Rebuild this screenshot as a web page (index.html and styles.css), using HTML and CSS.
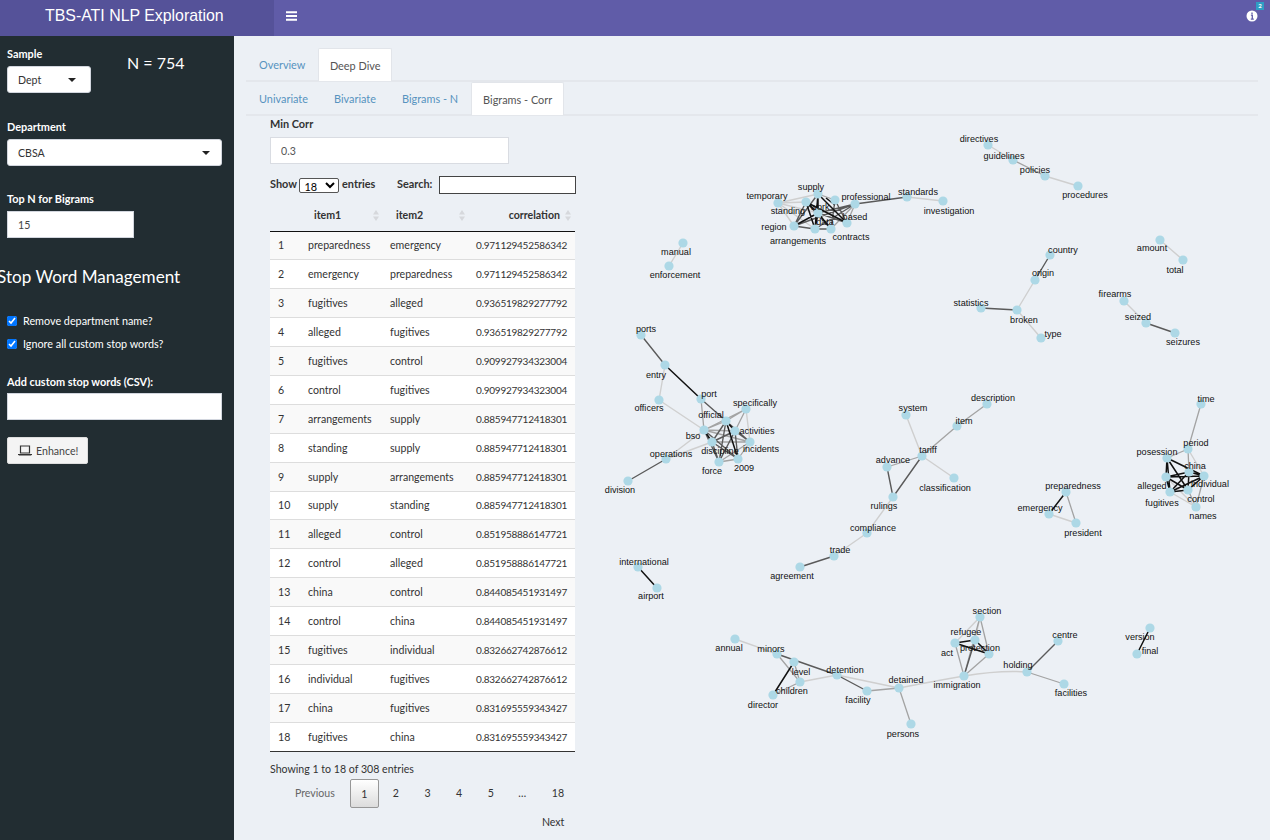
FILE: index.html
```html
<!DOCTYPE html>
<html lang="en">
<head>
<meta charset="utf-8">
<title>TBS-ATI NLP Exploration</title>
<link rel="stylesheet" href="styles.css">
</head>
<body>
<header class="topbar">
  <div class="logo">TBS-ATI NLP Exploration</div>
  <div class="navbar">
    <svg class="burger" width="11" height="10" viewBox="0 0 11 10"><path d="M0 1.2h11M0 5h11M0 8.8h11" stroke="#fff" stroke-width="1.9"/></svg>
    <div class="info">
      <svg width="12" height="12" viewBox="0 0 12 12"><circle cx="6" cy="6" r="5.5" fill="#fff"/><path d="M6 2.4v1.5M4.9 5.2H6.3V9M4.8 9.2h3" stroke="#605ca8" stroke-width="1.3" fill="none"/></svg>
      <span class="badge">2</span>
    </div>
  </div>
</header>
<div class="layout">
  <aside class="sidebar">
    <div class="sample-row">
      <div class="field">
        <label class="lbl">Sample</label>
        <div class="pick pick-sm"><span>Dept</span><i class="caret"></i></div>
      </div>
      <div class="count">N = 754</div>
    </div>
    <label class="lbl lbl-dept">Department</label>
    <div class="pick pick-lg"><span>CBSA</span><i class="caret"></i></div>
    <label class="lbl lbl-top">Top N for Bigrams</label>
    <input class="side-input side-input-sm" type="text" value="15">
    <h3 class="side-title">Stop Word Management</h3>
    <label class="check check-first"><input type="checkbox" checked>Remove department name?</label>
    <label class="check"><input type="checkbox" checked>Ignore all custom stop words?</label>
    <label class="lbl lbl-custom">Add custom stop words (CSV):</label>
    <input class="side-input side-input-lg" type="text">
    <button class="enhance" type="button">
      <svg width="14" height="11" viewBox="0 0 14 11"><path d="M2.5 1h9v7h-9z" fill="none" stroke="#333" stroke-width="1.2"/><path d="M0 9h14v.6l-1 1H1l-1-1z" fill="#333"/></svg>
      Enhance!
    </button>
  </aside>
  <main class="content">
    <nav class="tabs">
      <a class="tab">Overview</a>
      <a class="tab tab-on tab-dd">Deep Dive</a>
    </nav>
    <nav class="tabs">
      <a class="tab">Univariate</a>
      <a class="tab">Bivariate</a>
      <a class="tab">Bigrams - N</a>
      <a class="tab tab-on tab-corr">Bigrams - Corr</a>
    </nav>
    <section class="panel">
      <div class="left">
        <label class="lbl-dark">Min Corr</label>
        <input class="corr-input" type="text" value="0.3">
        <div class="dt-top">
          <label class="dt-len">Show <select><option>18</option></select> entries</label>
          <label class="dt-search">Search: <input type="text"></label>
        </div>
        <table class="dt">
          <colgroup><col class="c1"><col class="c2"><col class="c3"><col class="c4"></colgroup>
          <thead>
            <tr>
              <th></th>
              <th><div class="th-in"><span>item1</span><svg class="sort" width="6" height="11" viewBox="0 0 6 11"><path d="M3 0l3 4.5H0zM3 11L0 6.5h6z" fill="#d6d8dc"/></svg></div></th>
              <th><div class="th-in"><span>item2</span><svg class="sort" width="6" height="11" viewBox="0 0 6 11"><path d="M3 0l3 4.5H0zM3 11L0 6.5h6z" fill="#d6d8dc"/></svg></div></th>
              <th><div class="th-in th-end"><span>correlation</span><svg class="sort" width="6" height="11" viewBox="0 0 6 11"><path d="M3 0l3 4.5H0zM3 11L0 6.5h6z" fill="#d6d8dc"/></svg></div></th>
            </tr>
          </thead>
          <tbody>
            <tr><td>1</td><td>preparedness</td><td>emergency</td><td class="num">0.971129452586342</td></tr>
            <tr><td>2</td><td>emergency</td><td>preparedness</td><td class="num">0.971129452586342</td></tr>
            <tr><td>3</td><td>fugitives</td><td>alleged</td><td class="num">0.936519829277792</td></tr>
            <tr><td>4</td><td>alleged</td><td>fugitives</td><td class="num">0.936519829277792</td></tr>
            <tr><td>5</td><td>fugitives</td><td>control</td><td class="num">0.909927934323004</td></tr>
            <tr><td>6</td><td>control</td><td>fugitives</td><td class="num">0.909927934323004</td></tr>
            <tr><td>7</td><td>arrangements</td><td>supply</td><td class="num">0.885947712418301</td></tr>
            <tr><td>8</td><td>standing</td><td>supply</td><td class="num">0.885947712418301</td></tr>
            <tr><td>9</td><td>supply</td><td>arrangements</td><td class="num">0.885947712418301</td></tr>
            <tr><td>10</td><td>supply</td><td>standing</td><td class="num">0.885947712418301</td></tr>
            <tr><td>11</td><td>alleged</td><td>control</td><td class="num">0.851958886147721</td></tr>
            <tr><td>12</td><td>control</td><td>alleged</td><td class="num">0.851958886147721</td></tr>
            <tr><td>13</td><td>china</td><td>control</td><td class="num">0.844085451931497</td></tr>
            <tr><td>14</td><td>control</td><td>china</td><td class="num">0.844085451931497</td></tr>
            <tr><td>15</td><td>fugitives</td><td>individual</td><td class="num">0.832662742876612</td></tr>
            <tr><td>16</td><td>individual</td><td>fugitives</td><td class="num">0.832662742876612</td></tr>
            <tr><td>17</td><td>china</td><td>fugitives</td><td class="num">0.831695559343427</td></tr>
            <tr><td>18</td><td>fugitives</td><td>china</td><td class="num">0.831695559343427</td></tr>
          </tbody>
        </table>
        <div class="dt-info">Showing 1 to 18 of 308 entries</div>
        <div class="pager">
          <a class="pg pg-prev">Previous</a>
          <a class="pg pg-on">1</a>
          <a class="pg">2</a>
          <a class="pg">3</a>
          <a class="pg">4</a>
          <a class="pg">5</a>
          <span class="pg">…</span>
          <a class="pg pg-last">18</a>
          <a class="pg pg-next">Next</a>
        </div>
      </div>
      <svg class="graph" width="670" height="640" viewBox="590 120 670 640">
        <path class="e-l" d="M778 203L818 194M778 203L806 202M778 203L818 213M778 203L794 226M778 203L815 229M943 201L907 197M683 243L669 266M1160 240L1183 260M1124 301L1146 323M1017 310L1035 280M1017 310L1041 338M988 145L1013 160M1045 176L1078 186M665 365L659 400M659 400L704 430M704 430L666 459M712 442L666 459M746 409L750 442M906 415L922 456M922 456L954 478M893 497L867 533M867 533L834 556M1049 514L1076 523M735 639L777 654M800 682L837 675M837 675L899 688M899 688Q935 681 964 676M964 676Q1000 670 1027 672M980 617L955 643M980 617L975 640M1188 449L1204 476M1196 507L1166 477M1196 507L1170 492"/>
        <path class="e-m" d="M1201 404L1188 449M1066 492L1076 523M922 456L957 426M957 426L987 404M887 467L922 456M867 691L899 688M899 688L911 724M1027 672L1064 684M964 676L980 617M964 676L955 643M989 654L980 617M964 676L989 654M777 654L800 682M794 662L800 682M800 682L773 695M701 399L704 430M726 421L746 409M735 431L746 409M704 430L726 421M704 430L735 431M704 430L750 442M704 430L746 409M712 442L750 442M719 462L738 459M719 462L750 442M738 459L750 442M1013 160L1045 176M1196 507L1188 490M1196 507L1204 476M1188 449L1167 458M1188 449L1189 472M818 194L835 200M847 223L855 204M831 229L855 204"/>
        <path class="e-d" d="M641 335L665 365M701 399L726 421M628 481L666 459M887 467L893 497M922 456L893 497M800 567L834 556M855 204L907 197M981 308L1017 310M1146 323L1175 333M1050 255L1035 280M777 654L837 675M837 675L867 691M1027 672L1058 641M964 676L975 640M794 226L806 202M794 226L818 194M794 226L855 204M835 200L847 223M855 204L815 229M835 200L831 229M815 229L831 229M794 226L815 229M818 213L855 204M806 202L831 229M818 213L847 223M726 421L712 442M726 421L750 442M726 421L719 462M735 431L712 442M735 431L750 442M704 430L719 462M704 430L738 459M735 431L738 459M712 442L719 462M712 442L738 459M735 431L719 462"/>
        <path class="e-b" d="M818 194L818 213M806 202L818 213M794 226L818 213M815 229L818 213M806 202L815 229M818 194L815 229M818 194L847 223M806 202L847 223M818 213L831 229M826 198L835 205M665 365L701 399M726 421L735 431M726 421L738 459M704 430L712 442M1049 514L1066 492M638 567L657 588M794 662L773 695M955 643L975 640M975 640L989 654M955 643L989 654M1167 458L1166 477M1167 458L1204 476M1167 458L1188 490M1167 458L1170 492M1166 477L1189 472M1166 477L1204 476M1166 477L1188 490M1166 477L1170 492M1170 492L1189 472M1170 492L1204 476M1170 492L1188 490M1189 472L1188 490M1189 472L1204 476M1204 476L1188 490M1150 628L1137 654"/>
        <g class="nodes">
          <circle cx="818" cy="194" r="4.6"/><circle cx="778" cy="203" r="4.6"/><circle cx="806" cy="202" r="4.6"/><circle cx="818" cy="213" r="4.6"/><circle cx="835" cy="200" r="4.6"/><circle cx="855" cy="204" r="4.6"/><circle cx="907" cy="197" r="4.6"/><circle cx="943" cy="201" r="4.6"/><circle cx="847" cy="223" r="4.6"/><circle cx="794" cy="226" r="4.6"/><circle cx="815" cy="229" r="4.6"/><circle cx="831" cy="229" r="4.6"/>
          <circle cx="683" cy="243" r="4.6"/><circle cx="669" cy="266" r="4.6"/>
          <circle cx="988" cy="145" r="4.6"/><circle cx="1013" cy="160" r="4.6"/><circle cx="1045" cy="176" r="4.6"/><circle cx="1078" cy="186" r="4.6"/>
          <circle cx="1050" cy="255" r="4.6"/><circle cx="1035" cy="280" r="4.6"/><circle cx="981" cy="308" r="4.6"/><circle cx="1017" cy="310" r="4.6"/><circle cx="1041" cy="338" r="4.6"/>
          <circle cx="1160" cy="240" r="4.6"/><circle cx="1183" cy="260" r="4.6"/>
          <circle cx="1124" cy="301" r="4.6"/><circle cx="1146" cy="323" r="4.6"/><circle cx="1175" cy="333" r="4.6"/>
          <circle cx="641" cy="335" r="4.6"/><circle cx="665" cy="365" r="4.6"/><circle cx="659" cy="400" r="4.6"/><circle cx="701" cy="399" r="4.6"/><circle cx="746" cy="409" r="4.6"/><circle cx="726" cy="421" r="4.6"/><circle cx="735" cy="431" r="4.6"/><circle cx="704" cy="430" r="4.6"/><circle cx="750" cy="442" r="4.6"/><circle cx="712" cy="442" r="4.6"/><circle cx="738" cy="459" r="4.6"/><circle cx="719" cy="462" r="4.6"/><circle cx="666" cy="459" r="4.6"/><circle cx="628" cy="481" r="4.6"/>
          <circle cx="906" cy="415" r="4.6"/><circle cx="987" cy="404" r="4.6"/><circle cx="957" cy="426" r="4.6"/><circle cx="922" cy="456" r="4.6"/><circle cx="887" cy="467" r="4.6"/><circle cx="954" cy="478" r="4.6"/><circle cx="893" cy="497" r="4.6"/><circle cx="867" cy="533" r="4.6"/><circle cx="834" cy="556" r="4.6"/><circle cx="800" cy="567" r="4.6"/>
          <circle cx="1066" cy="492" r="4.6"/><circle cx="1049" cy="514" r="4.6"/><circle cx="1076" cy="523" r="4.6"/>
          <circle cx="1201" cy="404" r="4.6"/><circle cx="1188" cy="449" r="4.6"/><circle cx="1167" cy="458" r="4.6"/><circle cx="1189" cy="472" r="4.6"/><circle cx="1204" cy="476" r="4.6"/><circle cx="1166" cy="477" r="4.6"/><circle cx="1170" cy="492" r="4.6"/><circle cx="1188" cy="490" r="4.6"/><circle cx="1196" cy="507" r="4.6"/>
          <circle cx="638" cy="567" r="4.6"/><circle cx="657" cy="588" r="4.6"/>
          <circle cx="735" cy="639" r="4.6"/><circle cx="777" cy="654" r="4.6"/><circle cx="794" cy="662" r="4.6"/><circle cx="800" cy="682" r="4.6"/><circle cx="773" cy="695" r="4.6"/><circle cx="837" cy="675" r="4.6"/><circle cx="867" cy="691" r="4.6"/><circle cx="899" cy="688" r="4.6"/><circle cx="911" cy="724" r="4.6"/><circle cx="964" cy="676" r="4.6"/><circle cx="1027" cy="672" r="4.6"/><circle cx="1058" cy="641" r="4.6"/><circle cx="1064" cy="684" r="4.6"/><circle cx="980" cy="617" r="4.6"/><circle cx="975" cy="640" r="4.6"/><circle cx="955" cy="643" r="4.6"/><circle cx="989" cy="654" r="4.6"/>
          <circle cx="1150" cy="628" r="4.6"/><circle cx="1137" cy="654" r="4.6"/>
        </g>
        <g class="labels">
          <text x="811" y="190">supply</text><text x="767" y="199">temporary</text><text x="788" y="214">standing</text><text x="820" y="210">work</text><text x="825" y="225">data</text><text x="866" y="200">professional</text><text x="918" y="195">standards</text><text x="949" y="214">investigation</text><text x="855" y="220">based</text><text x="774" y="230">region</text><text x="798" y="244">arrangements</text><text x="851" y="240">contracts</text>
          <text x="676" y="255">manual</text><text x="675" y="278">enforcement</text>
          <text x="979" y="142">directives</text><text x="1004" y="159">guidelines</text><text x="1035" y="173">policies</text><text x="1085" y="198">procedures</text>
          <text x="1063" y="253">country</text><text x="1043" y="276">origin</text><text x="971" y="306">statistics</text><text x="1024" y="323">broken</text><text x="1053" y="337">type</text>
          <text x="1152" y="251">amount</text><text x="1175" y="273">total</text>
          <text x="1115" y="297">firearms</text><text x="1138" y="320">seized</text><text x="1183" y="345">seizures</text>
          <text x="646" y="332">ports</text><text x="656" y="378">entry</text><text x="649" y="411">officers</text><text x="709" y="397">port</text><text x="755" y="406">specifically</text><text x="711" y="418">official</text><text x="757" y="434">activities</text><text x="693" y="439">bso</text><text x="761" y="452">incidents</text><text x="720" y="454">discipline</text><text x="744" y="471">2009</text><text x="712" y="474">force</text><text x="671" y="457">operations</text><text x="620" y="493">division</text>
          <text x="913" y="411">system</text><text x="993" y="401">description</text><text x="964" y="424">item</text><text x="928" y="453">tariff</text><text x="893" y="463">advance</text><text x="945" y="491">classification</text><text x="884" y="509">rulings</text><text x="873" y="531">compliance</text><text x="840" y="553">trade</text><text x="792" y="579">agreement</text>
          <text x="1073" y="489">preparedness</text><text x="1040" y="511">emergency</text><text x="1083" y="536">president</text>
          <text x="1206" y="402">time</text><text x="1196" y="446">period</text><text x="1157" y="455">posession</text><text x="1195" y="469">china</text><text x="1210" y="487">individual</text><text x="1152" y="489">alleged</text><text x="1162" y="506">fugitives</text><text x="1201" y="502">control</text><text x="1203" y="519">names</text>
          <text x="644" y="565">international</text><text x="651" y="599">airport</text>
          <text x="729" y="651">annual</text><text x="771" y="652">minors</text><text x="801" y="675">level</text><text x="792" y="694">children</text><text x="763" y="708">director</text><text x="845" y="673">detention</text><text x="858" y="703">facility</text><text x="906" y="683">detained</text><text x="903" y="737">persons</text><text x="957" y="688">immigration</text><text x="1018" y="668">holding</text><text x="1065" y="638">centre</text><text x="1071" y="696">facilities</text><text x="987" y="614">section</text><text x="966" y="635">refugee</text><text x="947" y="656">act</text><text x="980" y="651">protection</text>
          <text x="1140" y="640">version</text><text x="1150" y="654">final</text>
        </g>
      </svg>
    </section>
  </main>
</div>
</body>
</html>
```
FILE: styles.css
```css
* { box-sizing: border-box; }
html, body { margin: 0; height: 840px; overflow: hidden; }
body {
  font-family: "Lato", "Open Sans", sans-serif;
  font-size: 10.6px;
  color: #333;
  background: #ecf0f5;
}
.topbar { display: flex; height: 36px; background: #605ca8; color: #fff; }
.logo {
  width: 274px;
  background: #555299;
  font-family: "Liberation Sans", Arial, sans-serif;
  font-size: 15.9px;
  line-height: 31px;
  padding-left: 45px;
}
.navbar { flex: 1; display: flex; align-items: center; justify-content: space-between; padding: 0 12px 5px 12px; }
.burger { display: block; }
.info { display: flex; position: relative; margin-top: 1px; }
.badge {
  position: absolute;
  right: -6px;
  top: -8px;
  width: 8px;
  height: 8px;
  background: #2f9ec4;
  color: #fff;
  font-size: 6px;
  font-weight: 700;
  line-height: 8px;
  text-align: center;
}
.layout { display: flex; height: 804px; }
.sidebar {
  width: 234px;
  flex: none;
  background: #222d32;
  color: #fff;
  display: flex;
  flex-direction: column;
  align-items: flex-start;
  padding: 12px 12px 0 7px;
}
.sample-row { display: flex; align-items: flex-start; }
.field { display: flex; flex-direction: column; align-items: flex-start; }
.lbl { display: block; font-size: 10.9px; font-weight: 700; line-height: 11px; padding-bottom: 2px; color: #fff; }
.pick {
  display: flex;
  align-items: center;
  justify-content: space-between;
  background: #fff;
  color: #333;
  border: 1px solid #d2d6de;
  border-radius: 3px;
  height: 27px;
  padding: 0 11px 0 10px;
}
.pick-sm { width: 84px; margin-top: 5px; padding-right: 14px; }
.pick-lg { width: 215px; margin-top: 5px; }
.caret { width: 0; height: 0; border: 4px solid transparent; border-top: 4.5px solid #222; border-bottom: 0; }
.count { font-size: 16px; line-height: 20px; margin: 5px 0 0 36px; }
.lbl-dept { margin-top: 28px; }
.lbl-top { margin-top: 27px; }
.side-input {
  display: block;
  height: 27px;
  margin-top: 5px;
  border: 1px solid #d2d6de;
  background: #fff;
  color: #444;
  font: inherit;
  padding: 0 10px;
  outline: 0;
}
.side-input-sm { width: 127px; }
.side-input-lg { width: 215px; margin-top: 4px; }
.side-title {
  font-size: 17.1px;
  font-weight: 400;
  line-height: 20px;
  margin: 29px 0 0 -10px;
  white-space: nowrap;
}
.check { display: flex; align-items: center; gap: 6px; font-size: 10.8px; line-height: 14px; white-space: nowrap; }
.check input { width: 10px; height: 10px; margin: 0; }
.check-first { margin: 27px 0 9px; }
.lbl-custom { margin-top: 25px; }
.enhance {
  display: flex;
  align-items: center;
  gap: 4px;
  margin-top: 17px;
  width: 81px;
  height: 27px;
  padding: 0 0 0 10px;
  background: #f4f4f4;
  border: 1px solid #ddd;
  border-radius: 2px;
  color: #444;
  font: inherit;
}
.content { flex: 1; min-width: 0; padding: 12px 12px 0; }
.tabs { display: flex; height: 34px; border-bottom: 2px solid #e4e7ec; font-size: 10.9px; }
.tab { display: block; padding: 0 13px; line-height: 34px; color: #5793bf; white-space: nowrap; }
.tab-on {
  background: #fff;
  color: #555;
  height: 33px;
  border: 1px solid #e2e5ea;
  border-bottom: 0;
  border-radius: 2px 2px 0 0;
  line-height: 33px;
  padding: 0 12px;
}
.tab-dd { padding: 0 10.5px; }
.tab-corr { padding: 0 11px; }
.panel { display: flex; }
.left { width: 306px; margin-left: 24px; flex: none; }
.lbl-dark { display: block; font-size: 10.9px; font-weight: 700; line-height: 11px; padding-bottom: 2px; margin-top: 2px; }
.corr-input {
  display: block;
  width: 239px;
  height: 27px;
  margin-top: 6px;
  border: 1px solid #d9dce2;
  background: #fff;
  font: inherit;
  color: #555;
  padding: 0 10px;
  outline: 0;
}
.dt-top { display: flex; justify-content: space-between; align-items: center; height: 18px; margin-top: 12px; font-size: 10.9px; font-weight: 700; color: #333; }
.dt-len select { vertical-align: middle; font: inherit; font-weight: 400; width: 40px; height: 15px; padding: 0; background: #fff; border: 1px solid #555; border-radius: 2px; }
.dt-search input { vertical-align: middle; width: 137px; height: 18px; border: 1px solid #444; background: #fff; margin-left: 4px; padding: 0 3px; }
.dt { width: 305px; border-collapse: collapse; table-layout: fixed; margin-top: 9px; border-bottom: 1.5px solid #333; }
.c1 { width: 30px; }
.c2 { width: 82px; }
.c3 { width: 86px; }
.dt th { height: 28px; padding: 0; border-bottom: 1.5px solid #111; font-weight: 700; text-align: left; }
.th-in { display: flex; align-items: center; justify-content: space-between; padding: 0 3px 3px 14px; }
.th-end { justify-content: flex-end; gap: 5px; padding: 0 4px 3px 0; }
.sort { display: block; }
.dt td { height: 28.9px; padding: 0 8px; border-bottom: 1px solid #ddd; background: #fff; white-space: nowrap; }
.dt tbody tr:nth-child(odd) td { background: #f9f9f9; }
.dt tbody tr:last-child td { border-bottom: 0; }
.dt td.num { text-align: right; font-size: 10px; letter-spacing: -0.25px; }
.dt-info { margin-top: 10px; line-height: 14px; }
.pager { display: flex; flex-wrap: wrap; justify-content: flex-end; align-items: center; margin-top: 3px; padding-right: 1px; }
.pg { display: block; min-width: 29px; height: 29px; padding: 0 2px; margin-right: 2.6px; line-height: 29px; text-align: center; color: #333; }
.pg-prev { color: #666; padding: 0 10px; margin-right: 5px; }
.pg-on { border: 1px solid #979797; border-radius: 2px; background: linear-gradient(#fff, #dcdcdc); }
.pg-last { margin-left: 4px; }
.pg-next { padding: 0 8px; }
.graph { display: block; margin-left: 14px; margin-top: 4px; flex: none; }
.graph path { fill: none; }
.e-l { stroke: #cfcfcf; stroke-width: 1.4; }
.e-m { stroke: #a3a3a3; stroke-width: 1.3; }
.e-d { stroke: #5a5a5a; stroke-width: 1.4; }
.e-b { stroke: #111; stroke-width: 1.5; }
.nodes circle { fill: #add8e6; }
.labels text { font-family: "Liberation Sans", Arial, sans-serif; font-size: 9.1px; fill: #111; text-anchor: middle; }
```
